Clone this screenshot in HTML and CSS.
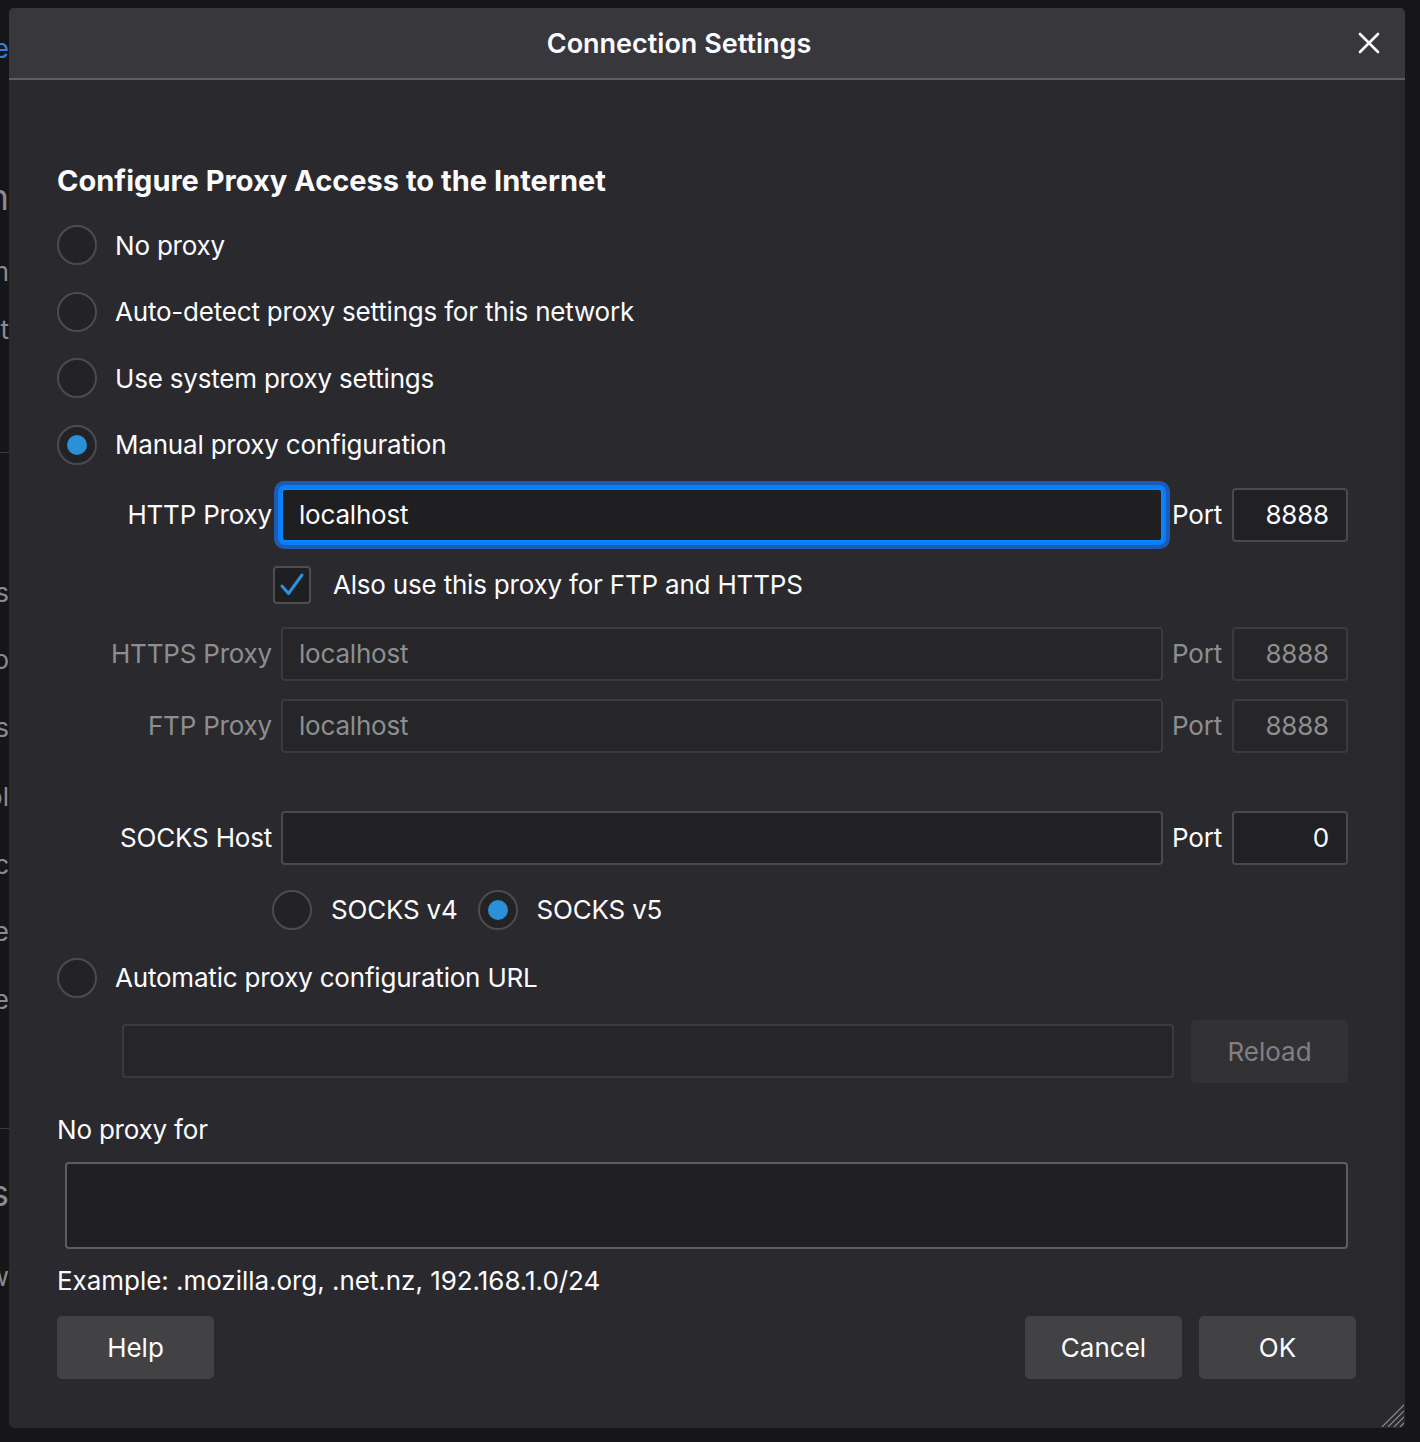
FILE: index.html
```html
<!DOCTYPE html>
<html lang="en">
<head>
<meta charset="utf-8">
<title>Connection Settings</title>
<link rel="stylesheet" href="styles.css">
</head>
<body>
<div class="backdrop">
  <div class="bd-item bd-link">Browse</div>
  <div class="bd-item bd-big">Main</div>
  <div class="bd-item">Platform</div>
  <div class="bd-item">Content</div>
  <div class="bd-sep"></div>
  <div class="bd-item">Bookmarks</div>
  <div class="bd-item">Info</div>
  <div class="bd-item">Settings</div>
  <div class="bd-item">Tool</div>
  <div class="bd-item">Sync</div>
  <div class="bd-item">Theme</div>
  <div class="bd-item">Alternate</div>
  <div class="bd-sep"></div>
  <div class="bd-item bd-big">Settings</div>
  <div class="bd-item">Show</div>
</div>

<div class="dialog">
  <header class="dlg-header">
    <h1 class="dlg-title">Connection Settings</h1>
    <button class="close-btn" aria-label="Close">
      <svg width="22" height="22" viewBox="0 0 22 22"><path d="M2 2 L20 20 M20 2 L2 20" stroke="#fbfbfe" stroke-width="2.6" stroke-linecap="round"/></svg>
    </button>
  </header>

  <main class="dlg-body">
    <h2 class="section-title">Configure Proxy Access to the Internet</h2>

    <div class="radio-group">
      <div class="radio-row"><span class="radio"></span><span>No proxy</span></div>
      <div class="radio-row"><span class="radio"></span><span>Auto-detect proxy settings for this network</span></div>
      <div class="radio-row"><span class="radio"></span><span>Use system proxy settings</span></div>
      <div class="radio-row"><span class="radio checked"></span><span>Manual proxy configuration</span></div>
    </div>

    <div class="proxy-row row-http">
      <span class="field-label">HTTP Proxy</span>
      <div class="text-input focused">localhost</div>
      <span class="port-label">Port</span>
      <div class="port-input">8888</div>
    </div>

    <div class="check-row">
      <span class="checkbox">
        <svg width="26" height="26" viewBox="0 0 26 26"><path d="M3 14 L9.5 21.5 L23 3" fill="none" stroke="#2a92d9" stroke-width="3" stroke-linecap="round" stroke-linejoin="round"/></svg>
      </span>
      <span>Also use this proxy for FTP and HTTPS</span>
    </div>

    <div class="proxy-row row-https disabled">
      <span class="field-label">HTTPS Proxy</span>
      <div class="text-input">localhost</div>
      <span class="port-label">Port</span>
      <div class="port-input">8888</div>
    </div>

    <div class="proxy-row row-ftp disabled">
      <span class="field-label">FTP Proxy</span>
      <div class="text-input">localhost</div>
      <span class="port-label">Port</span>
      <div class="port-input">8888</div>
    </div>

    <div class="proxy-row row-socks">
      <span class="field-label">SOCKS Host</span>
      <div class="text-input"></div>
      <span class="port-label">Port</span>
      <div class="port-input">0</div>
    </div>

    <div class="socks-versions">
      <div class="radio-row"><span class="radio"></span><span>SOCKS v4</span></div>
      <div class="radio-row"><span class="radio checked"></span><span>SOCKS v5</span></div>
    </div>

    <div class="radio-row row-auto"><span class="radio"></span><span>Automatic proxy configuration URL</span></div>

    <div class="url-row">
      <div class="text-input disabled-input"></div>
      <button class="btn btn-disabled">Reload</button>
    </div>

    <div class="noproxy-label">No proxy for</div>
    <div class="textarea"></div>
    <div class="example">Example: .mozilla.org, .net.nz, 192.168.1.0/24</div>

    <div class="button-row">
      <button class="btn">Help</button>
      <div class="button-group">
        <button class="btn">Cancel</button>
        <button class="btn">OK</button>
      </div>
    </div>
  </main>

  <svg class="resize-grip" width="26" height="26" viewBox="0 0 26 26">
    <path d="M26 4 L4 26 M26 10 L10 26 M26 16 L16 26 M26 22 L22 26" stroke="#8a8a8e" stroke-width="1.2"/>
  </svg>
</div>
</body>
</html>
```

FILE: styles.css
```css
html, body {
  margin: 0;
  padding: 0;
}

body {
  width: 1420px;
  height: 1442px;
  background: #161618;
  font-family: "Inter", "Noto Sans", "Liberation Sans", sans-serif;
  color: #fbfbfe;
  position: relative;
  overflow: hidden;
}

/* ---- page behind the modal ---- */
.backdrop {
  width: 9px;
  height: 1442px;
  overflow: hidden;
  display: flex;
  flex-direction: column;
  background: #161618;
}

.bd-item {
  height: 34px;
  line-height: 34px;
  font-size: 26px;
  color: #8b8b8f;
  white-space: nowrap;
  display: flex;
  justify-content: flex-end;
  flex: none;
}

.bd-link { color: #3b7fd6; margin-top: 32px; }
.bd-big { font-size: 36px; }
.bd-sep { height: 1px; background: #3a3a3d; flex: none; }

.backdrop > :nth-child(2) { margin-top: 114px; }
.backdrop > :nth-child(3) { margin-top: 41px; }
.backdrop > :nth-child(4) { margin-top: 24px; }
.backdrop > :nth-child(5) { margin-top: 105px; }
.backdrop > :nth-child(6) { margin-top: 123px; }
.backdrop > :nth-child(7) { margin-top: 33px; }
.backdrop > :nth-child(8) { margin-top: 34px; }
.backdrop > :nth-child(9) { margin-top: 35px; }
.backdrop > :nth-child(10) { margin-top: 34px; }
.backdrop > :nth-child(11) { margin-top: 33px; }
.backdrop > :nth-child(12) { margin-top: 34px; }
.backdrop > :nth-child(13) { margin-top: 111px; }
.backdrop > :nth-child(14) { margin-top: 47px; }
.backdrop > :nth-child(15) { margin-top: 50px; }

/* ---- modal dialog ---- */
.dialog {
  position: absolute;
  left: 9px;
  top: 8px;
  width: 1396px;
  height: 1420px;
  background: #2a2a2e;
  border-radius: 5px;
  overflow: hidden;
  display: flex;
  flex-direction: column;
}

.dlg-header {
  position: relative;
  height: 72px;
  flex: none;
  box-sizing: border-box;
  padding-right: 56px;
  padding-top: 2px;
  background: #38373c;
  border-bottom: 2px solid #5e5e62;
  display: flex;
  align-items: center;
  justify-content: center;
}

.dlg-title {
  margin: 0;
  font-size: 27px;
  font-weight: 600;
  line-height: 32px;
  letter-spacing: 0;
}

.close-btn {
  position: absolute;
  right: 25px;
  top: 24px;
  width: 22px;
  height: 22px;
  padding: 0;
  border: none;
  background: none;
  display: flex;
}

.dlg-body {
  padding: 84px 57px 0 48px;
  display: flex;
  flex-direction: column;
  font-size: 26px;
  letter-spacing: -0.2px;
}

.section-title {
  margin: 0;
  font-size: 29px;
  font-weight: 700;
  line-height: 34px;
  letter-spacing: 0.02px;
}

.radio-group {
  display: flex;
  flex-direction: column;
  gap: 26.67px;
  margin-top: 27px;
}

.radio-row {
  display: flex;
  align-items: center;
  height: 40px;
  gap: 18px;
  white-space: nowrap;
}

.radio {
  width: 40px;
  height: 40px;
  box-sizing: border-box;
  border-radius: 50%;
  border: 2px solid #4c4c50;
  background: #232326;
  display: flex;
  align-items: center;
  justify-content: center;
  flex: none;
}

.radio.checked::after {
  content: "";
  width: 20px;
  height: 20px;
  border-radius: 50%;
  background: #2a90d8;
}

/* ---- proxy rows ---- */
.proxy-row {
  display: flex;
  align-items: center;
  height: 54px;
}

.field-label {
  width: 215px;
  flex: none;
  text-align: right;
  margin-right: 9px;
  white-space: nowrap;
}

.text-input {
  flex: 1;
  height: 54px;
  box-sizing: border-box;
  border: 2px solid #4a4a4e;
  border-radius: 4px;
  background: #212124;
  padding: 0 16px;
  display: flex;
  align-items: center;
}

.text-input.focused {
  border-color: #0a84ff;
  background: #1f1f21;
  box-shadow: 0 0 0 3px #0a7ef5, 0 0 0 7px #1c5cb6;
}

.port-label {
  margin: 0 10px 0 9px;
}

.port-input {
  width: 116px;
  height: 54px;
  flex: none;
  box-sizing: border-box;
  border: 2px solid #4a4a4e;
  border-radius: 4px;
  background: #212124;
  padding: 0 17px;
  display: flex;
  align-items: center;
  justify-content: flex-end;
}

.row-http { margin-top: 23px; }
.row-https { margin-top: 23px; }
.row-ftp { margin-top: 18px; }
.row-socks { margin-top: 58px; }

.disabled { color: #8e8e92; }
.disabled .text-input,
.disabled .port-input,
.disabled-input {
  background: #262629;
  border-color: #3b3b3f;
}

.check-row {
  display: flex;
  align-items: center;
  gap: 22px;
  height: 38px;
  margin-top: 24px;
  padding-left: 216px;
}

.checkbox {
  width: 38px;
  height: 38px;
  box-sizing: border-box;
  border: 2px solid #4e4e52;
  border-radius: 4px;
  background: #1f1f22;
  display: flex;
  align-items: center;
  justify-content: center;
  flex: none;
}

.socks-versions {
  display: flex;
  align-items: center;
  gap: 20px;
  margin-top: 25px;
  padding-left: 215px;
}

.socks-versions .radio-row { gap: 19px; }

.row-auto { margin-top: 28px; }

.url-row {
  display: flex;
  align-items: center;
  gap: 17px;
  height: 63px;
  margin-top: 22px;
  padding-left: 65px;
}

.btn {
  width: 157px;
  height: 63px;
  border: none;
  border-radius: 5px;
  background: #424245;
  color: #fbfbfe;
  font: inherit;
  font-size: 26px;
  padding: 0;
  flex: none;
}

.btn-disabled {
  background: #323235;
  color: #808084;
}

.noproxy-label {
  margin-top: 31px;
  line-height: 32px;
}

.textarea {
  margin-top: 16px;
  margin-left: 8px;
  height: 87px;
  box-sizing: border-box;
  border: 2px solid #5e5e62;
  border-radius: 4px;
  background: #202022;
}

.example {
  margin-top: 16px;
  line-height: 32px;
  letter-spacing: -0.04px;
}

.button-row {
  display: flex;
  justify-content: space-between;
  margin-top: 19px;
  margin-right: -8px;
}

.button-group {
  display: flex;
  gap: 17px;
}

.resize-grip {
  position: absolute;
  right: 1px;
  bottom: 1px;
}
```
